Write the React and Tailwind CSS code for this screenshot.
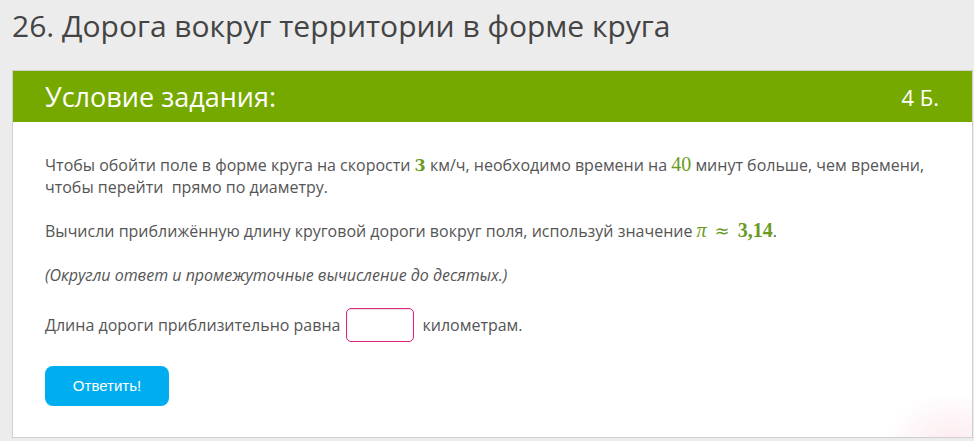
export default function App() {
  return (
    <div className="w-[974px] h-[441px] bg-[#ececec] overflow-hidden relative font-['Open_Sans',sans-serif]">
      <h1 className="pl-[12px] pt-[6px] h-[70px] text-[30px] leading-[40px] text-[#444] font-normal">
        26. Дорога вокруг территории в форме круга
      </h1>
      <div className="ml-[12px] w-[961px] h-[368px] border border-[#cfcfcf] bg-white relative overflow-hidden">
        <div className="h-[51px] bg-[#76a900] flex items-center justify-between pl-[32px] pr-[33px] text-white">
          <span className="text-[27px] leading-none">Условие задания:</span>
          <span className="text-[22px] leading-none">4 Б.</span>
        </div>
        <div className="pl-[32px] pr-[30px] pt-[32px] text-[16px] leading-[22px] text-[#555]">
          <p>
            Чтобы обойти поле в форме круга на скорости{" "}
            <span className="font-['DejaVu_Serif',serif] font-bold text-[#6a9a1f] text-[16px] leading-none">3</span> км/ч, необходимо времени на{" "}
            <span className="font-['Liberation_Serif',serif] text-[#6a9a1f] text-[20px] leading-none">40</span> минут больше, чем времени,
            <br />
            чтобы перейти&nbsp; прямо по диаметру.
          </p>
          <p className="mt-[22px]">
            Вычисли приближённую длину круговой дороги вокруг поля, используй значение{" "}
            <span className="font-['Liberation_Serif',serif] text-[#6a9a1f] text-[20px] italic leading-none">π</span>
            <span className="font-['DejaVu_Serif',serif] text-[#6a9a1f] text-[18px] mx-[8px] leading-none">≈</span>
            <span className="font-['Liberation_Serif',serif] text-[#6a9a1f] text-[20px] font-bold leading-none">3,14</span>.
          </p>
          <p className="mt-[22px] italic">(Округли ответ и промежуточные вычисление до десятых.)</p>
          <div className="mt-[22px] flex items-center">
            <span>Длина дороги приблизительно равна</span>
            <div className="ml-[6px] mr-[8px] w-[68px] h-[34px] rounded-[5px] border border-[#e0237f] shadow-[inset_0_1px_2px_rgba(0,0,0,0.12)]" />
            <span>километрам.</span>
          </div>
          <button className="mt-[24px] w-[124px] h-[40px] rounded-[8px] bg-[#00aeef] text-white text-[15px] font-['Liberation_Sans',sans-serif]">
            Ответить!
          </button>
        </div>
        <div className="absolute right-[-60px] bottom-[-90px] w-[160px] h-[130px] rounded-full bg-[radial-gradient(circle,rgba(250,210,220,0.6),rgba(255,255,255,0)_70%)]" />
      </div>
    </div>
  );
}
